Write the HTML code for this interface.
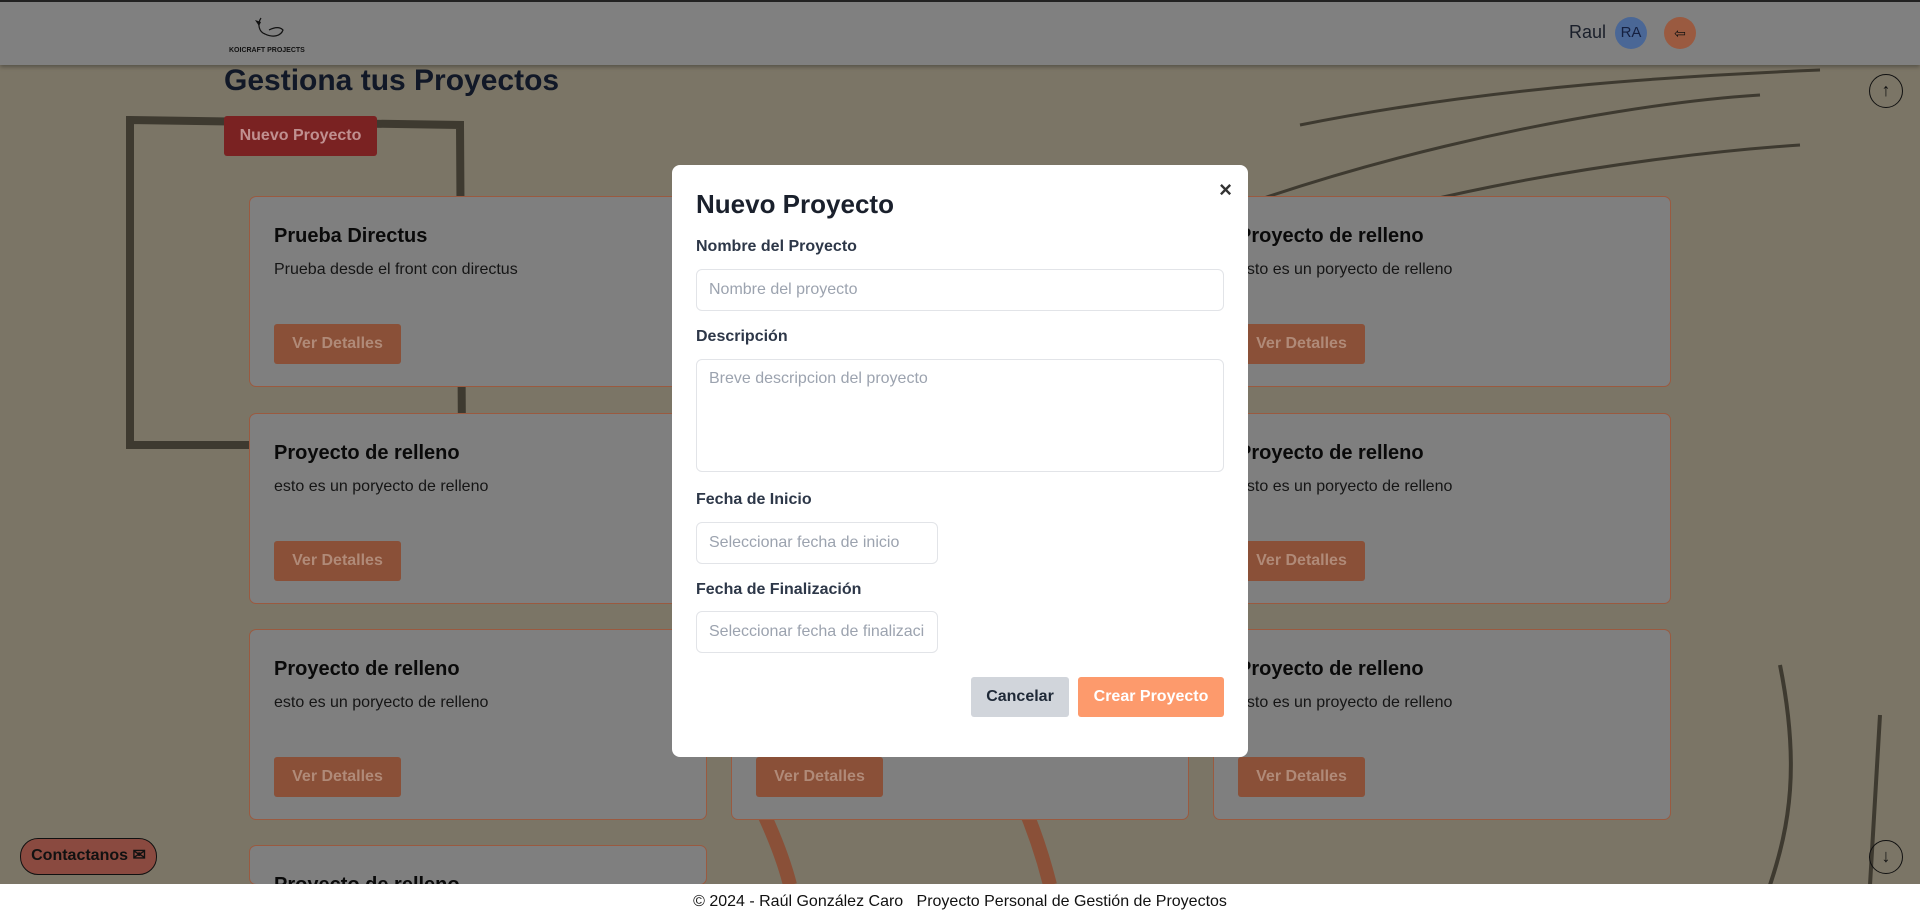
<!DOCTYPE html>
<html style="height:918px;overflow:hidden"><head><meta charset="utf-8"><style>
*{box-sizing:border-box;margin:0;padding:0}
body{width:1920px;height:918px;overflow:hidden;background:#7b7566;font-family:"Liberation Sans",sans-serif;position:relative}
.abs{position:absolute}
.hdr{left:0;top:0;width:1920px;height:65px;background:#808080;border-top:2px solid #222;box-shadow:0 2px 4px rgba(0,0,0,.3)}
.card{width:458px;height:191px;background:#7f7f7f;border:1px solid #9a5a40;border-radius:7px;overflow:hidden}
.card h3{position:absolute;left:24px;top:28px;font-size:20px;color:#0a0a0a;font-weight:bold}
.card p{position:absolute;left:24px;top:64px;font-size:16px;color:#151515}
.card .b{position:absolute;left:24px;top:127px;width:127px;height:40px;background:#8a5038;border-radius:3px;color:#b08a78;font-weight:bold;font-size:16px;text-align:center;line-height:40px}
.modal{left:672px;top:165px;width:576px;height:592px;background:#fff;border-radius:8px}
.lbl{position:absolute;left:24px;font-size:16px;font-weight:bold;color:#2d3748}
.inp{position:absolute;left:24px;border:1px solid #e2e4e8;border-radius:6px;font-size:16px;color:#9ca3af;padding-left:12px;line-height:40px}
.foot{left:0;top:884px;width:1920px;height:34px;background:#fff;text-align:center;font-size:16px;color:#111;line-height:36px}
.circ{width:34px;height:34px;border:1.5px solid #111;border-radius:50%;text-align:center;line-height:31px;font-size:18px;color:#111}
</style></head><body>
<svg class="abs" style="left:0;top:65px" width="1920" height="819">
<path d="M130 55 L460 60 L462 380 L130 380 Z" fill="none" stroke="#3e3a30" stroke-width="8"/>
<path d="M1100 200 C1300 100 1600 40 1760 30 M1150 230 C1350 130 1650 90 1800 80 M1300 60 C1500 20 1700 10 1820 5" stroke="#3e3a30" stroke-width="3" fill="none"/>
<path d="M740 700 C760 740 780 780 790 820 M980 660 C1020 720 1040 780 1050 820" stroke="#8a5038" stroke-width="14" fill="none"/>
<path d="M1880 650 L1870 820 M1780 600 C1800 700 1790 760 1770 820" stroke="#3e3a30" stroke-width="4" fill="none"/>
</svg>
<div class="abs hdr"></div>
<div class="abs" style="left:229px;top:14px;width:80px;height:40px;">
<svg width="80" height="30"><path d="M32 4 C28 10 30 18 36 20 C44 24 52 22 54 16 C50 12 44 14 40 16" fill="none" stroke="#111" stroke-width="1.2"/><path d="M26 6 l6 2 l-2 4z" fill="#111"/></svg>
<div style="font-size:7px;font-weight:bold;color:#111;margin-top:-2px">KOICRAFT PROJECTS</div></div>
<div class="abs" style="left:1569px;top:22px;font-size:18px;color:#1a1f2a">Raul</div>
<div class="abs" style="left:1615px;top:17px;width:32px;height:32px;border-radius:50%;background:#4a6796;color:#152040;font-size:15px;text-align:center;line-height:32px">RA</div>
<div class="abs" style="left:1664px;top:17px;width:32px;height:32px;border-radius:50%;background:#9a5a40;text-align:center;line-height:32px;font-size:14px;color:#111">⇦</div>
<div class="abs" style="left:224px;top:64px;font-size:30px;font-weight:bold;color:#111827">Gestiona tus Proyectos</div>
<div class="abs" style="left:224px;top:116px;width:153px;height:40px;background:#7a2222;border-radius:3px;color:#c09090;font-weight:bold;font-size:16px;text-align:center;line-height:40px">Nuevo Proyecto</div>
<div class="abs card" style="left:249px;top:196px"><h3>Prueba Directus</h3><p>Prueba desde el front con directus</p><div class="b">Ver Detalles</div></div>
<div class="abs card" style="left:1213px;top:196px"><h3>Proyecto de relleno</h3><p>esto es un poryecto de relleno</p><div class="b">Ver Detalles</div></div>
<div class="abs card" style="left:249px;top:413px"><h3>Proyecto de relleno</h3><p>esto es un poryecto de relleno</p><div class="b">Ver Detalles</div></div>
<div class="abs card" style="left:1213px;top:413px"><h3>Proyecto de relleno</h3><p>esto es un poryecto de relleno</p><div class="b">Ver Detalles</div></div>
<div class="abs card" style="left:249px;top:629px"><h3>Proyecto de relleno</h3><p>esto es un poryecto de relleno</p><div class="b">Ver Detalles</div></div>
<div class="abs card" style="left:731px;top:629px"><h3>Proyecto de relleno</h3><p>esto es un poryecto de relleno</p><div class="b">Ver Detalles</div></div>
<div class="abs card" style="left:1213px;top:629px"><h3>Proyecto de relleno</h3><p>esto es un proyecto de relleno</p><div class="b">Ver Detalles</div></div>
<div class="abs card" style="left:249px;top:845px;height:40px"><h3>Proyecto de relleno</h3></div>
<div class="abs circ" style="left:1869px;top:74px">↑</div>
<div class="abs circ" style="left:1869px;top:840px">↓</div>
<div class="abs" style="left:20px;top:838px;width:137px;height:37px;background:#8a4a40;border:1.5px solid #111;border-radius:18px;font-weight:bold;font-size:16px;color:#111;text-align:center;line-height:34px">Contactanos ✉</div>
<div class="abs foot">© 2024 - Raúl González Caro &nbsp; Proyecto Personal de Gestión de Proyectos</div>
<div class="abs modal">
<div class="abs" style="right:16px;top:12px;font-size:22px;font-weight:bold;color:#333">×</div>
<div class="abs" style="left:24px;top:24px;font-size:26px;font-weight:bold;color:#1a202c">Nuevo Proyecto</div>
<div class="lbl" style="top:73px">Nombre del Proyecto</div>
<div class="inp" style="top:104px;width:528px;height:42px">Nombre del proyecto</div>
<div class="lbl" style="top:163px">Descripción</div>
<div class="inp" style="top:194px;width:528px;height:113px;line-height:22px;padding-top:8px">Breve descripcion del proyecto</div>
<div class="lbl" style="top:326px">Fecha de Inicio</div>
<div class="inp" style="top:357px;width:242px;height:42px">Seleccionar fecha de inicio</div>
<div class="lbl" style="top:416px">Fecha de Finalización</div>
<div class="inp" style="top:446px;width:242px;height:42px;overflow:hidden;white-space:nowrap">Seleccionar fecha de finalizaci</div>
<div class="abs" style="left:299px;top:512px;width:98px;height:40px;background:#d1d5db;border-radius:3px;font-weight:bold;font-size:16px;color:#1f2937;text-align:center;line-height:40px">Cancelar</div>
<div class="abs" style="left:406px;top:512px;width:146px;height:40px;background:#fd9a6c;border-radius:3px;font-weight:bold;font-size:16px;color:#fff;text-align:center;line-height:40px">Crear Proyecto</div>
</div>
</body></html>
